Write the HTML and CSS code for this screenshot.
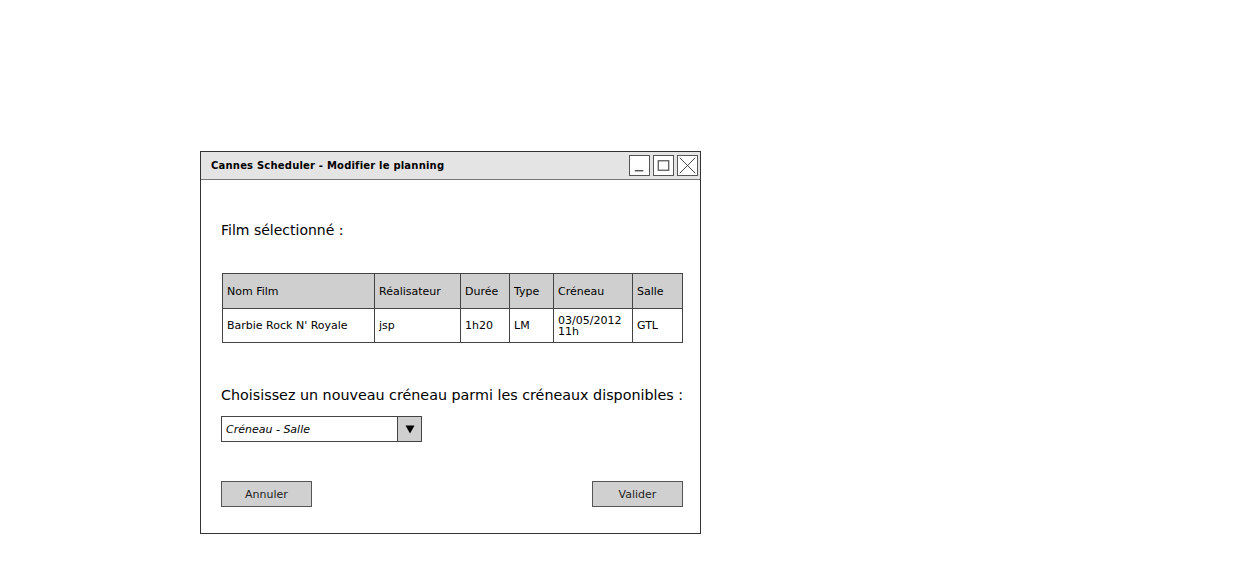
FILE: index.html
```html
<!DOCTYPE html>
<html lang="fr">
<head>
<meta charset="utf-8">
<title>Cannes Scheduler</title>
<link rel="stylesheet" href="styles.css">
</head>
<body>
<div class="page">
  <div class="window">
    <div class="titlebar">
      <span class="title">Cannes Scheduler - Modifier le planning</span>
      <div class="controls">
        <span class="ctl"><svg width="20" height="21" viewBox="0 0 20 21"><line x1="5" y1="16" x2="14" y2="16" stroke="#555" stroke-width="1.5"/></svg></span>
        <span class="ctl"><svg width="20" height="21" viewBox="0 0 20 21"><rect x="4.5" y="5.5" width="11" height="10" fill="none" stroke="#555" stroke-width="1.3"/></svg></span>
        <span class="ctl"><svg width="21" height="21" viewBox="0 0 21 21"><path d="M2 2 L19 19 M19 2 L2 19" stroke="#333" stroke-width="1"/></svg></span>
      </div>
    </div>
    <div class="body">
      <p class="label first">Film sélectionné :</p>
      <table class="grid">
        <thead>
          <tr>
            <th class="c1">Nom Film</th>
            <th class="c2">Réalisateur</th>
            <th class="c3">Durée</th>
            <th class="c4">Type</th>
            <th class="c5">Créneau</th>
            <th class="c6">Salle</th>
          </tr>
        </thead>
        <tbody>
          <tr>
            <td>Barbie Rock N' Royale</td>
            <td>jsp</td>
            <td>1h20</td>
            <td>LM</td>
            <td class="multi">03/05/2012<br>11h</td>
            <td>GTL</td>
          </tr>
        </tbody>
      </table>
      <p class="label second">Choisissez un nouveau créneau parmi les créneaux disponibles :</p>
      <div class="select">
        <span class="select-text">Créneau - Salle</span>
        <span class="select-btn"><svg width="10" height="9" viewBox="0 0 10 9"><path d="M0.5 0.5 L9.5 0.5 L5 8.5 Z" fill="#000"/></svg></span>
      </div>
      <div class="actions">
        <button class="btn">Annuler</button>
        <button class="btn">Valider</button>
      </div>
    </div>
  </div>
</div>
</body>
</html>
```

FILE: styles.css
```css
* { box-sizing: border-box; }
html, body { margin: 0; padding: 0; background: #fff; }
body { font-family: "DejaVu Sans", "Noto Sans", sans-serif; color: #000; }
.page { padding: 151px 0 0 200px; }
.window {
  width: 501px;
  height: 383px;
  border: 1px solid #333;
  background: #fff;
  display: flex;
  flex-direction: column;
}
.titlebar {
  height: 28px;
  background: #e4e4e4;
  border-bottom: 1px solid #777;
  display: flex;
  align-items: center;
  justify-content: space-between;
  padding: 0 2px 0 10px;
}
.title { font-size: 10px; font-weight: bold; letter-spacing: 0.2px; }
.controls { display: flex; gap: 3px; }
.ctl {
  display: flex;
  width: 21px; height: 21px;
  border: 1px solid #555;
  background: #fff;
  align-items: center; justify-content: center;
}
.ctl svg { display: block; }
.body { padding: 0 12px 0 20px; flex: 1; display: flex; flex-direction: column; }
.label { margin: 0; font-size: 14px; white-space: nowrap; }
.first { margin-top: 42px; }
.grid {
  margin-top: 35px;
  margin-left: 1px;
  border-collapse: collapse;
  width: 461px;
  font-size: 11px;
  border: 1.5px solid #333;
}
.grid th, .grid td {
  border: 1px solid #444;
  text-align: left;
  font-weight: normal;
  padding: 0 4px;
  vertical-align: middle;
}
.grid th { background: #cfcfcf; height: 35px; }
.grid td { height: 34px; }
.grid td.multi { line-height: 11px; }
.c1 { width: 152px; }
.c2 { width: 86px; }
.c3 { width: 49px; }
.c4 { width: 44px; }
.c5 { width: 79px; }
.c6 { width: 50px; }
.second { margin-top: 44px; font-size: 14.3px; }
.select {
  margin-top: 13px;
  width: 201px;
  height: 26px;
  border: 1px solid #444;
  display: flex;
}
.select-text { flex: 1; font-size: 11px; font-style: italic; padding-left: 4px; display: flex; align-items: center; }
.select-btn {
  width: 24px;
  background: #cfcfcf;
  border-left: 1px solid #444;
  display: flex; align-items: center; justify-content: center;
}
.actions {
  margin-top: 39px;
  display: flex;
  justify-content: space-between;
  width: 462px;
}
.btn {
  width: 91px;
  height: 26px;
  background: #d0d0d0;
  border: 1px solid #555;
  font-family: inherit;
  font-size: 11px;
  color: #222;
  padding: 0;
}
```
